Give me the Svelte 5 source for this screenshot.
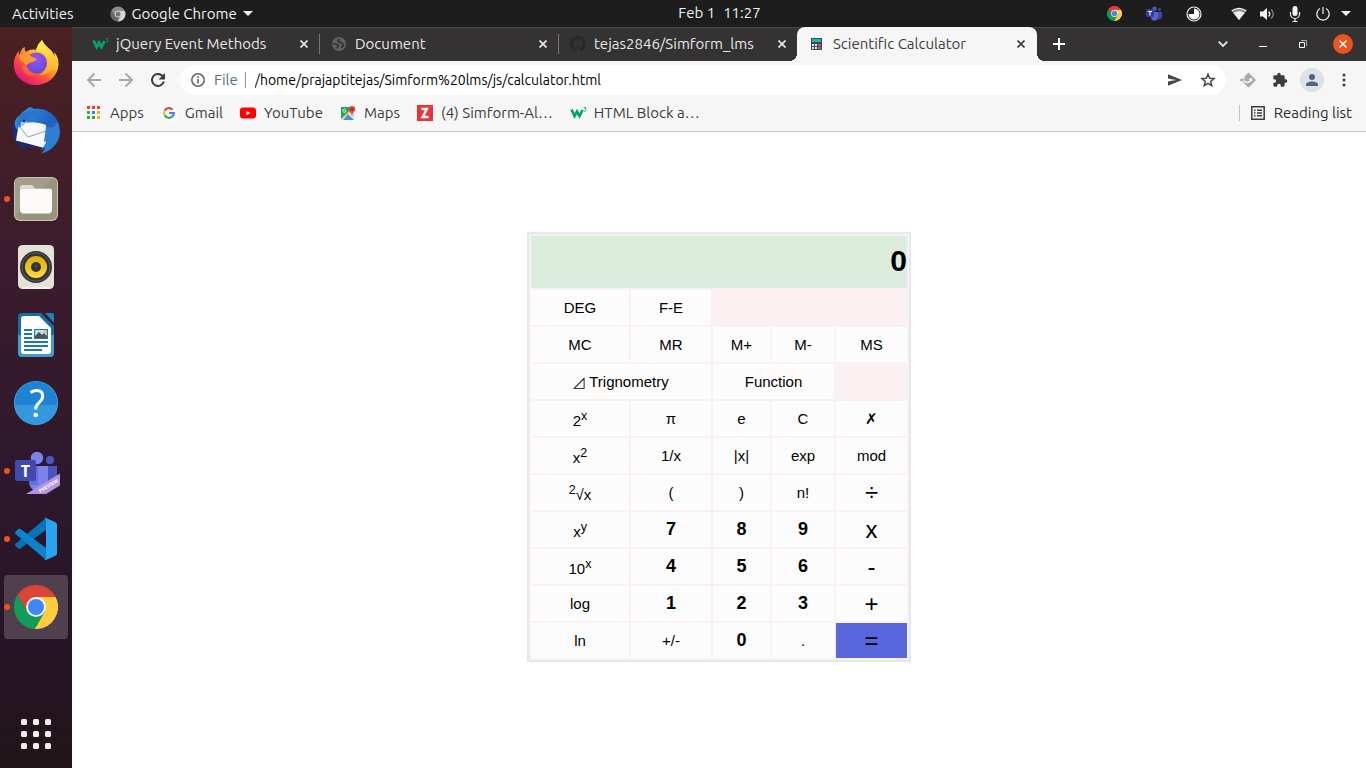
<script>
  let entry = $state('0');

  const tabs = [
    { icon: 'w3', title: 'jQuery Event Methods', active: false },
    { icon: 'globe', title: 'Document', active: false },
    { icon: 'github', title: 'tejas2846/Simform_lms', active: false },
    { icon: 'calc', title: 'Scientific Calculator', active: true },
  ];

  const bookmarks = [
    { icon: 'apps', label: 'Apps' },
    { icon: 'google', label: 'Gmail' },
    { icon: 'youtube', label: 'YouTube' },
    { icon: 'maps', label: 'Maps' },
    { icon: 'z', label: '(4) Simform-Al…' },
    { icon: 'w3', label: 'HTML Block a…' },
  ];

  const dock = [
    { icon: 'firefox', label: 'Firefox', running: false },
    { icon: 'thunderbird', label: 'Thunderbird', running: false },
    { icon: 'files', label: 'Files', running: true },
    { icon: 'rhythmbox', label: 'Rhythmbox', running: false },
    { icon: 'writer', label: 'LibreOffice Writer', running: false },
    { icon: 'help', label: 'Help', running: false },
    { icon: 'teams', label: 'Microsoft Teams', running: true },
    { icon: 'vscode', label: 'Visual Studio Code', running: true },
    { icon: 'chrome', label: 'Google Chrome', running: true, focused: true },
  ];

  const keys = [
    { t: 'DEG' }, { t: 'F-E' }, { blank: 'three' },
    { t: 'MC' }, { t: 'MR' }, { t: 'M+' }, { t: 'M-' }, { t: 'MS' },
    { t: '◿ Trignometry', wide: true }, { t: 'Function', wide: true }, { blank: 'one' },
    { t: '2', sup: 'x' }, { t: 'π' }, { t: 'e' }, { t: 'C' }, { t: '✗' },
    { t: 'x', sup: '2' }, { t: '1/x' }, { t: '|x|' }, { t: 'exp' }, { t: 'mod' },
    { pre: '2', t: '√x' }, { t: '(' }, { t: ')' }, { t: 'n!' }, { t: '÷', kind: 'op' },
    { t: 'x', sup: 'y' }, { t: '7', kind: 'num' }, { t: '8', kind: 'num' }, { t: '9', kind: 'num' }, { t: 'x', kind: 'op' },
    { t: '10', sup: 'x' }, { t: '4', kind: 'num' }, { t: '5', kind: 'num' }, { t: '6', kind: 'num' }, { t: '-', kind: 'op' },
    { t: 'log' }, { t: '1', kind: 'num' }, { t: '2', kind: 'num' }, { t: '3', kind: 'num' }, { t: '+', kind: 'op' },
    { t: 'ln' }, { t: '+/-' }, { t: '0', kind: 'num' }, { t: '.' }, { t: '=', kind: 'op equals' },
  ];

  function press(key) {
    if (key.kind === 'num') entry = entry === '0' ? key.t : entry + key.t;
    else if (key.t === 'C') entry = '0';
    else if (key.t === '✗') entry = entry.length > 1 ? entry.slice(0, -1) : '0';
    else if (key.t === '.' && !entry.includes('.')) entry += '.';
  }
</script>

{#snippet chromeLogo(size)}
  <svg width={size} height={size} viewBox="0 0 44 44" aria-hidden="true">
    <path fill="#db4437" d="M3.54 10.03A22 22 0 0 1 41.6 12H22l-8.66 15z" />
    <path fill="#0f9d58" d="M3.54 10.03 13.34 27h17.32l-9.8 16.97A22 22 0 0 1 3.54 10.03z" />
    <path fill="#ffcd40" d="M41.6 12a22 22 0 0 1-20.74 31.97L30.66 27 22 12z" />
    <circle cx="22" cy="22" r="10" fill="#f1f1f1" />
    <circle cx="22" cy="22" r="8" fill="#4285f4" />
  </svg>
{/snippet}

{#snippet smallIcon(name)}
  {#if name === 'w3'}
    <svg width="18" height="16" viewBox="0 0 18 16" aria-hidden="true">
      <path d="M1.500 4.500 4.500 11 7 6.500 9.500 11 12.500 5" fill="none" stroke="#04a56b" stroke-width="2.700" />
      <path d="M13.800 2.500h2.200l-1.200 1.500c1.700.2 1.500 2.300-.2 2.300-.5 0-.9-.2-1.100-.6" fill="none" stroke="#04a56b" stroke-width=".8" />
    </svg>
  {:else if name === 'globe'}
    <svg width="16" height="16" viewBox="0 0 16 16" aria-hidden="true">
      <circle cx="8" cy="8" r="7" fill="#5f6368" />
      <path d="M1.800 7.500 5 8c1.500.2 2.300.8 2.200 2-.1.900-1 1-1.200 2.500M8.500 3.300C7 3.500 6.500 4.500 7 5.300c.8 1 2.300.5 3.200 1.200.9.8 1 1.800 2.300 2-.3 1.500-1.300 2.500-2.500 3" fill="none" stroke="#343233" stroke-width="1.700" />
    </svg>
  {:else if name === 'github'}
    <svg width="16" height="16" viewBox="0 0 16 16" aria-hidden="true">
      <path fill="#24292e" d="M8 0C3.580 0 0 3.580 0 8c0 3.540 2.290 6.530 5.470 7.590.4.070.55-.17.55-.38 0-.19-.01-.82-.01-1.490-2.010.37-2.530-.49-2.690-.94-.09-.23-.48-.94-.82-1.130-.28-.15-.68-.52-.01-.53.63-.01 1.080.58 1.230.82.72 1.210 1.870.87 2.330.66.07-.52.28-.87.51-1.070-1.780-.2-3.640-.89-3.640-3.950 0-.87.31-1.590.82-2.150-.08-.2-.36-1.020.08-2.120 0 0 .67-.21 2.200.82.64-.18 1.320-.27 2-.27s1.360.09 2 .27c1.530-1.040 2.200-.82 2.200-.82.44 1.100.16 1.920.08 2.120.51.56.82 1.270.82 2.150 0 3.070-1.870 3.750-3.650 3.950.29.25.54.73.54 1.480 0 1.070-.01 1.930-.01 2.200 0 .21.15.46.55.38A8 8 0 0 0 16 8c0-4.420-3.580-8-8-8z" />
    </svg>
  {:else if name === 'calc'}
    <svg width="16" height="16" viewBox="0 0 16 16" aria-hidden="true">
      <path fill="#fff" d="M1 1h13v14H1z" />
      <path fill="#34495e" d="M2 2h11v12H2z" />
      <path fill="#1abc9c" d="M3 3h9v3H3z" />
      <path fill="#dfe6ec" d="M3 8h2v2H3zm3 0h2v2H6zm-3 3h2v2H3zm3 0h2v2H6z" />
      <path fill="#e74c3c" d="M9 8h3v2H9zm0 3h3v2H9z" />
    </svg>
  {:else if name === 'apps'}
    <svg width="14" height="14" viewBox="0 0 14 14" aria-hidden="true">
      <path fill="#f43b30" d="M0 0h3v3H0zm5 0h3v3H5zm5 0h3v3h-3z" />
      <path fill="#34a853" d="M0 5h3v3H0zm0 5h3v3H0zm5 0h3v3H5z" />
      <path fill="#2684fc" d="M5 5h3v3H5z" />
      <path fill="#fbb003" d="M10 5h3v3h-3zm0 5h3v3h-3z" />
    </svg>
  {:else if name === 'google'}
    <svg width="16" height="16" viewBox="0 0 16 16" aria-hidden="true">
      <circle cx="8" cy="8" r="8" fill="#fff" />
      <g fill="none" stroke-width="2.200">
        <path stroke="#ea4335" d="M3.700 5.700A4.800 4.800 0 0 1 11.500 4.700" />
        <path stroke="#fbbc05" d="M3.700 5.700a4.800 4.800 0 0 0 0 4.600" />
        <path stroke="#34a853" d="M3.700 10.300a4.800 4.800 0 0 0 7.400 1.400" />
        <path stroke="#4285f4" d="M8 8h4.800a4.800 4.800 0 0 1-1.700 3.700" />
      </g>
    </svg>
  {:else if name === 'youtube'}
    <svg width="16" height="16" viewBox="0 0 16 16" aria-hidden="true">
      <rect x="0" y="2.500" width="16" height="11" rx="3" fill="#f00" />
      <path fill="#fff" d="M6.400 5.700v4.600l4-2.300z" />
    </svg>
  {:else if name === 'maps'}
    <svg width="16" height="16" viewBox="0 0 16 16" aria-hidden="true">
      <path fill="#1fa463" d="M1 2h9v5L1 15z" />
      <path fill="#f5f5f5" d="m1 14 9-8 1.500 2L4 15H2z" />
      <path fill="#4a89f3" d="m8 9 6 6H3z" />
      <path fill="#d5d5d5" d="m11 7 3 2v5L9.500 9z" />
      <path fill="#fbc216" d="m8.500 6.500 2-1.500.5 1.500L2 14.500 1 14z" />
      <path d="M5.700 4.800A1.600 1.600 0 1 0 6 6H4.600" fill="none" stroke="#fff" stroke-width=".8" />
      <path fill="#dc4b3e" d="M12 1a3.300 3.300 0 0 0-3.300 3.300c0 2.300 2.600 3.200 3.300 6.200.7-3 3.300-3.900 3.300-6.200A3.300 3.300 0 0 0 12 1z" />
      <circle cx="12" cy="4.300" r="1.200" fill="#822f2b" />
    </svg>
  {:else if name === 'z'}
    <svg width="16" height="16" viewBox="0 0 16 16" aria-hidden="true">
      <path fill="#ea3439" d="M0 0h16v16H0z" />
      <path d="M4.500 4h5.400L5.600 12h6" fill="none" stroke="#fff" stroke-width="2.300" />
    </svg>
  {/if}
{/snippet}

{#snippet dockIcon(name)}
  {#if name === 'firefox'}
    <svg width="48" height="48" viewBox="0 0 48 48" aria-hidden="true">
      <defs>
        <linearGradient id="fx-body" x1=".85" y1=".1" x2=".2" y2=".95">
          <stop offset="0" stop-color="#fff14f" /><stop offset=".35" stop-color="#ffb52e" />
          <stop offset=".62" stop-color="#ff5a36" /><stop offset="1" stop-color="#e3107c" />
        </linearGradient>
        <linearGradient id="fx-flame" x1=".5" y1="0" x2=".6" y2="1">
          <stop offset="0" stop-color="#fff44f" /><stop offset="1" stop-color="#ffa52c" />
        </linearGradient>
        <radialGradient id="fx-core" cx=".5" cy=".3" r=".7">
          <stop offset="0" stop-color="#a04ff0" /><stop offset="1" stop-color="#5a4fd8" />
        </radialGradient>
      </defs>
      <path fill="url(#fx-body)" d="M30 1c-1 4-5 7-6 10-4-1-8 0-10 2-1-1-1.500-3-1.300-5C9 10 8 14 7.500 16c-.9-1-.8-3-.6-4C3 16 1.500 22 1.800 26.500 2.500 38 12 46 24 46c12.500 0 22.500-9.500 22.500-21.500C46.500 20 45 16 42 13c.5 2 .6 3 .3 4.500C40 10 32 8 30 1z" />
      <path fill="url(#fx-flame)" d="M30 1c-4 3.500-6 8-6 12 7-1 11 4 11.500 10 .3 6-3 11-9 13 9 .5 16-5 18-13 .4-2 0-5-2.200-6.500C40 10 33 8 30 1z" />
      <circle cx="24.500" cy="24" r="10.500" fill="url(#fx-core)" />
      <path fill="#ff9a30" d="M7 16c3-1.500 6-1.500 9-1 3 2 5 3.500 8.500 4.500 0 2-2 3-5.500 4-2 0-3 2-5 3-2-3-7-5-7-10.500z" />
      <path fill="#ff6a35" d="M14 26c2 5 6 9 12 9-8 4-16 0-16-8z" opacity=".7" />
    </svg>
  {:else if name === 'thunderbird'}
    <svg width="48" height="48" viewBox="0 0 48 48" aria-hidden="true">
      <defs>
        <linearGradient id="tb" x1="0" y1="0" x2="1" y2="1">
          <stop offset="0" stop-color="#2f9be5" /><stop offset=".55" stop-color="#1f5fc0" /><stop offset="1" stop-color="#2c78cf" />
        </linearGradient>
      </defs>
      <path fill="#1d2b78" d="M1 17C-2 30 5 40 14 43l-2-5 11 5z" />
      <path fill="url(#tb)" d="M15 2c1-2 4-2.500 7 0C37 .5 48 11 48 25c0 9-6 18-19 22l4-5-5 1 8-8-5 1 3-12-18-8-9 8C1 20 1 13 8 8c2-3 4-4 7-6z" />
      <path fill="#f7f8fa" d="M7 18c10-4 18-3 27 0v24L4 34c1-6 1-8 3-16z" />
      <path fill="#1f2a5c" d="m4 33.500 30 8V43L5 36z" />
      <path fill="none" stroke="#9aa2a8" stroke-width="1" d="m7 19 9 11 18-6" />
      <path fill="#2774cb" d="M8 8c5-5 17-6 24-1-7-1-13 1-15 6-3 1-6 2-9 8-3-5-3-9 0-13z" />
      <path fill="#8fd0ef" d="m8 21 1-6c2-1 4 0 6-1-1 3-4 4-7 7z" />
      <circle cx="12" cy="14" r="1.300" fill="#0f1d3f" />
      <path fill="#2f7fd2" d="M34 19c5 3 9 1 12-4 4 13-1 26-16 31l4-5-4 1 5-8-3 1z" />
    </svg>
  {:else if name === 'files'}
    <svg width="48" height="48" viewBox="0 0 48 48" aria-hidden="true">
      <rect x="2" y="2" width="44" height="44" rx="6" fill="#c8c3b0" />
      <rect x="3" y="3" width="42" height="42" rx="5" fill="#999480" />
      <path fill="#a39e8a" d="M3 8a5 5 0 0 1 5-5h33L3 40z" />
      <path fill="#dedacd" d="M8 12.500A2.500 2.500 0 0 1 10.500 10H20l3 3.500h14.500A2.500 2.500 0 0 1 40 16v6H8z" />
      <rect x="8" y="14" width="32" height="24" rx="3" fill="#fbfaf8" />
      <path d="M10 38.500h28" stroke="#ccc7ba" />
    </svg>
  {:else if name === 'rhythmbox'}
    <svg width="48" height="48" viewBox="0 0 48 48" aria-hidden="true">
      <defs>
        <linearGradient id="cone" x1="0" y1="0" x2="0" y2="1">
          <stop offset="0" stop-color="#dfb017" /><stop offset=".5" stop-color="#edc31c" /><stop offset="1" stop-color="#ffd94f" />
        </linearGradient>
      </defs>
      <rect x="6" y="2" width="36" height="44" rx="4.500" fill="#e6e2d7" />
      <path d="M10 45h28" stroke="#fff" />
      <circle cx="24" cy="24" r="16" fill="#333536" />
      <circle cx="24" cy="24" r="14.200" fill="none" stroke="#555b60" />
      <circle cx="24" cy="24" r="11" fill="url(#cone)" />
      <circle cx="24" cy="24" r="5" fill="#303435" />
      <circle cx="24" cy="23" r="1.500" fill="#4d5052" />
    </svg>
  {:else if name === 'writer'}
    <svg width="48" height="48" viewBox="0 0 48 48" aria-hidden="true">
      <path fill="#1171a5" d="M10 2h19l13 13v27a4 4 0 0 1-4 4H10a4 4 0 0 1-4-4V6a4 4 0 0 1 4-4z" />
      <path fill="#3d9fca" d="M6 24h36v18a4 4 0 0 1-4 4H10a4 4 0 0 1-4-4z" />
      <path fill="#1f83b7" d="M33 2h7a2 2 0 0 1 2 2v8z" />
      <path fill="#fff" d="M12 5h15l12 12v23a3 3 0 0 1-3 3H12a3 3 0 0 1-3-3V8a3 3 0 0 1 3-3z" />
      <path stroke="#2177a8" stroke-width="2" d="M12 19h8m-8 4h8m-8 4h8m-8 4h24m-24 4h24m-24 4h18" />
      <path fill="#2177a8" d="M22 18h14v10H22z" />
      <path fill="#b5dcf1" d="M23 19h12v8H23z" />
      <path fill="#54514d" d="M23 27v-2l4-4 3 3 2-2 3 3v2z" />
      <path fill="#f2c31a" d="M31 19h4v4z" />
    </svg>
  {:else if name === 'help'}
    <svg width="48" height="48" viewBox="0 0 48 48" aria-hidden="true">
      <circle cx="24" cy="24" r="22" fill="#57b1ec" />
      <circle cx="24" cy="23.700" r="21.300" fill="#1f83d5" />
      <path fill="#3498df" d="M2.700 26h42.500a21.300 21.300 0 0 1-42.500 0z" />
      <path d="M18.500 13.500c2-1.300 4-2 6-2 4 0 6.200 2.200 6.200 5.500 0 6.500-7 6.500-7 12.500v1" fill="none" stroke="#fff" stroke-width="3" />
      <circle cx="23.700" cy="36" r="2.300" fill="#fff" />
    </svg>
  {:else if name === 'teams'}
    <svg width="48" height="48" viewBox="0 0 48 48" aria-hidden="true">
      <circle cx="38" cy="13" r="4.200" fill="#4a55bd" />
      <circle cx="25" cy="11" r="6.200" fill="#7b83eb" />
      <path fill="#4b53bc" d="M34 19h11v13c0 5-4 8-10 8z" />
      <path fill="#7b83eb" d="M18 19h18v15c0 7-5 10-10 10-6 0-9-5-9-9z" />
      <path fill="#5059c9" d="M17 19h9v19h-9z" opacity=".5" />
      <rect x="3" y="13" width="21" height="21" rx="1.800" fill="#4149ad" />
      <text x="13.500" y="29.500" class="teams-t">T</text>
      <path fill="#b394e4" d="M48 26.500v12L34 47H14z" />
      <text class="preview" transform="translate(28 46) rotate(-31)">PREVIEW</text>
    </svg>
  {:else if name === 'vscode'}
    <svg width="48" height="48" viewBox="0 0 48 48" aria-hidden="true">
      <path fill="#0a71b5" d="M34 3v12L8.500 33.500a1.500 1.500 0 0 1-2 0L3.500 31a1.500 1.500 0 0 1 0-2.200z" />
      <path fill="#0d83cc" d="M34 45V33L8.500 14a1.500 1.500 0 0 0-2 0l-3 2.700a1.500 1.500 0 0 0 0 2.200z" />
      <path fill="#29a3ef" d="m34 3 9.500 4.200A2.500 2.500 0 0 1 45 9.500v29a2.500 2.500 0 0 1-1.500 2.300L34 45c-1 .4-2 0-2.500-.5 1 .6 2.500 0 2.500-1.500V5c0-1.500-1.500-2-2.500-1.500.5-.6 1.500-.9 2.500-.5z" />
    </svg>
  {:else}
    {@render chromeLogo(44)}
  {/if}
{/snippet}

<div class="desktop">
  <header class="topbar">
    <div class="top-left">
      <button class="activities">Activities</button>
      <button class="app-menu">
        <svg width="16" height="16" viewBox="0 0 16 16" aria-hidden="true">
          <circle cx="8" cy="8" r="7.500" fill="#8b8b8b" />
          <path fill="#d6d6d6" d="M14.800 5A7.500 7.500 0 0 1 8 15.500L11 9.500 8 5z" />
          <path fill="#666" d="m1.500 4.500 3.700 5.300L8 11l-.5 4.500A7.500 7.500 0 0 1 1.500 4.500z" />
          <circle cx="8" cy="8" r="3.300" fill="#ddd" />
          <circle cx="8" cy="8" r="2.500" fill="#777" />
        </svg>
        Google Chrome
        <svg width="10" height="6" viewBox="0 0 10 6" aria-hidden="true"><path fill="#f2f2f2" d="M0 0h10L5 5z" /></svg>
      </button>
    </div>
    <button class="clock"><span>Feb 1</span><span>11:27</span></button>
    <div class="tray">
      {@render chromeLogo(15)}
      <svg class="tray-teams" width="16" height="16" viewBox="0 0 16 16" aria-hidden="true">
        <circle cx="8.500" cy="2.800" r="2.200" fill="#5059c9" /><circle cx="13.500" cy="3.500" r="1.500" fill="#3c45ad" />
        <path fill="#3c45ad" d="M10 6h6v4c0 3-3 4-5 3z" /><path fill="#5a63d0" d="M5 6h7v5c0 5-7 5-7 0z" />
        <rect y="3" width="8" height="8" rx="1" fill="#333c9f" /><path d="M2 5.500h4M4 5.500V9.500" stroke="#fff" fill="none" />
      </svg>
      <svg class="tray-timer" width="16" height="16" viewBox="0 0 16 16" aria-hidden="true">
        <circle cx="8" cy="8" r="7" fill="none" stroke="#f2f2f2" stroke-width="1.200" />
        <path fill="#fff" d="M8 2.500A5.500 5.500 0 1 1 2.500 8H8z" />
      </svg>
      <svg class="tray-wifi" width="16" height="16" viewBox="0 0 16 16" aria-hidden="true">
        <path fill="#8d8d8d" d="M.5 5C5 1.500 11 1.500 15.500 5L8 14z" /><path fill="#f2f2f2" d="M2.500 7C6 4.700 10 4.700 13.500 7L8 14z" /><path d="M.7 4.800c4.500-3 10-3 14.600 0" fill="none" stroke="#f2f2f2" stroke-width="1.300" />
      </svg>
      <svg width="16" height="16" viewBox="0 0 16 16" aria-hidden="true">
        <path fill="#f2f2f2" d="M1 5.500h3L8 2v12l-4-3.500H1z" /><path d="M9.700 5.500c1.300 1.500 1.300 3.500 0 5" fill="none" stroke="#f2f2f2" stroke-width="1.300" /><path d="M12 3.500c3 2.500 3 6.500 0 9" fill="none" stroke="#8c8c8c" stroke-width="1.200" />
      </svg>
      <svg width="16" height="16" viewBox="0 0 16 16" aria-hidden="true">
        <rect x="5.500" y="0" width="5" height="10" rx="2.500" fill="#f2f2f2" /><path d="M3.500 6v2a4.500 4.500 0 0 0 9 0V6M8 12.500V15M5.500 15.500h5" fill="none" stroke="#f2f2f2" stroke-width="1.200" />
      </svg>
      <svg width="16" height="16" viewBox="0 0 16 16" aria-hidden="true">
        <path d="M5 2.500a6.200 6.200 0 1 0 6 0M8 1v7" fill="none" stroke="#f2f2f2" stroke-width="1.200" />
      </svg>
      <svg width="10" height="6" viewBox="0 0 10 6" aria-hidden="true"><path fill="#f2f2f2" d="M0 0h10L5 5z" /></svg>
    </div>
  </header>

  <div class="workspace">
    <nav class="dock" aria-label="Dock">
      {#each dock as app}
        <button class="dock-item" class:running={app.running} class:focused={app.focused} aria-label={app.label}>
          {@render dockIcon(app.icon)}
        </button>
      {/each}
      <button class="dock-item show-apps" aria-label="Show Applications">
        <svg width="30" height="30" viewBox="0 0 30 30" aria-hidden="true">
          {#each [0, 12, 24] as y}
            {#each [0, 12, 24] as x}
              <rect {x} {y} width="6" height="6" rx="1.500" fill="#f1eeed" />
            {/each}
          {/each}
        </svg>
      </button>
    </nav>

    <div class="browser">
      <div class="tabstrip">
        {#each tabs as tab}
          <div class="tab" class:active={tab.active}>
            <span class="favicon">{@render smallIcon(tab.icon)}</span>
            <span class="tab-title">{tab.title}</span>
            <button class="tab-close" aria-label="Close tab">
              <svg width="8" height="8" viewBox="0 0 8 8" aria-hidden="true"><path d="m.5.500 7 7m0-7-7 7" stroke="currentColor" stroke-width="1.700" /></svg>
            </button>
          </div>
        {/each}
        <button class="new-tab" aria-label="New tab">
          <svg width="12" height="12" viewBox="0 0 12 12" aria-hidden="true"><path d="M6 0v12M0 6h12" stroke="#fff" stroke-width="2" /></svg>
        </button>
        <div class="window-controls">
          <button aria-label="Search tabs"><svg width="10" height="6" viewBox="0 0 10 6" aria-hidden="true"><path d="m.7.700 4.300 4.300L9.300.700" fill="none" stroke="#e6e6e6" stroke-width="1.800" /></svg></button>
          <button aria-label="Minimize"><svg width="8" height="8" viewBox="0 0 8 8" aria-hidden="true"><path d="M0 6.500h8" stroke="#fff" /></svg></button>
          <button aria-label="Restore"><svg width="8" height="8" viewBox="0 0 8 8" aria-hidden="true"><path d="M.5 2.500h5v5h-5z" fill="none" stroke="#fff" /><path d="M2 .500h5.500V6" fill="none" stroke="#aaa" /></svg></button>
          <button class="close" aria-label="Close"><svg width="8" height="8" viewBox="0 0 8 8" aria-hidden="true"><path d="m.5.500 7 7m0-7-7 7" stroke="#fff" stroke-width="1.500" /></svg></button>
        </div>
      </div>

      <div class="toolbar">
        <button class="tool" aria-label="Back"><svg width="16" height="16" viewBox="0 0 16 16" aria-hidden="true"><path d="M15 8H2m6.500-6.500L2 8l6.500 6.500" fill="none" stroke="#a6a6a6" stroke-width="1.800" /></svg></button>
        <button class="tool" aria-label="Forward"><svg width="16" height="16" viewBox="0 0 16 16" aria-hidden="true"><path d="M1 8h13M7.500 1.500 14 8l-6.500 6.500" fill="none" stroke="#a6a6a6" stroke-width="1.800" /></svg></button>
        <button class="tool" aria-label="Reload"><svg width="16" height="16" viewBox="0 0 16 16" aria-hidden="true"><path d="M13.800 9.500A6 6 0 1 1 12.300 3.800L14 5.500" fill="none" stroke="#3b3b3b" stroke-width="2" /><path fill="#3b3b3b" d="M15 1v6.500H8.500z" /></svg></button>
        <div class="omnibox">
          <svg width="14" height="14" viewBox="0 0 14 14" aria-hidden="true"><circle cx="7" cy="7" r="6.200" fill="none" stroke="#5f6368" stroke-width="1.500" /><path d="M7 6v4.500M7 3.300V5" stroke="#5f6368" stroke-width="1.600" /></svg>
          <label class="scheme" for="address">File</label>
          <input id="address" type="text" value="/home/prajaptitejas/Simform%20lms/js/calculator.html" spellcheck="false" />
          <button class="tool" aria-label="Share"><svg width="16" height="16" viewBox="0 0 16 16" aria-hidden="true"><path fill="#474747" d="M1 2.200 15 8 1 13.800V9.500L9 8 1 6.500z" /></svg></button>
          <button class="tool" aria-label="Bookmark this page"><svg width="16" height="16" viewBox="0 0 16 16" aria-hidden="true"><path d="m8 2.200 1.700 4 4.300.4-3.300 2.800 1 4.200L8 11.400l-3.700 2.200 1-4.200L2 6.600l4.300-.4z" fill="none" stroke="#474747" stroke-width="1.500" /></svg></button>
        </div>
        <button class="tool" aria-label="Extension"><svg width="16" height="16" viewBox="0 0 16 16" aria-hidden="true"><path fill="#a8a8a8" d="m8.500.5 7.500 7.500-7.500 7.500L3 10l2-2-2-2z" /><path d="M4 8.500c1.200 2.500 4.500 2.800 6.500 0" fill="none" stroke="#f6f6f6" stroke-width="1.700" /><path fill="#f6f6f6" d="m8.500 7 3.800-1.300L12 10z" /><path fill="#f6f6f6" d="M2.500 5.500h3v4h-3z" /><circle cx="1.700" cy="8" r="1.500" fill="#a8a8a8" /><circle cx="4.700" cy="7.500" r="1.200" fill="#a8a8a8" /></svg></button>
        <button class="tool" aria-label="Extensions"><svg width="16" height="16" viewBox="0 0 24 24" aria-hidden="true"><path fill="#3c3c3c" d="M20.500 11H19V7a2 2 0 0 0-2-2h-4V3.500a2.500 2.500 0 0 0-5 0V5H4a2 2 0 0 0-2 2v3.800h1.500a2.700 2.700 0 0 1 0 5.400H2V20a2 2 0 0 0 2 2h3.800v-1.500a2.700 2.700 0 0 1 5.400 0V22H17a2 2 0 0 0 2-2v-4h1.500a2.500 2.500 0 0 0 0-5z" /></svg></button>
        <button class="tool avatar" aria-label="Profile"><svg width="14" height="14" viewBox="0 0 14 14" aria-hidden="true"><circle cx="7" cy="4" r="3" fill="#55617a" /><path fill="#55617a" d="M1 13v-1.500C1 9.300 5 8.500 7 8.500s6 .8 6 3V13z" /></svg></button>
        <button class="tool" aria-label="Menu"><svg width="4" height="14" viewBox="0 0 4 14" aria-hidden="true"><g fill="#3c3c3c"><circle cx="2" cy="2" r="1.500" /><circle cx="2" cy="7" r="1.500" /><circle cx="2" cy="12" r="1.500" /></g></svg></button>
      </div>

      <div class="bookmarks">
        {#each bookmarks as mark}
          <a class="bookmark" href="#{mark.icon}">
            <span class="favicon">{@render smallIcon(mark.icon)}</span>{mark.label}
          </a>
        {/each}
        <button class="reading">
          <svg width="14" height="14" viewBox="0 0 14 14" aria-hidden="true"><path d="M.8.800h12.400v12.400H.8z" fill="none" stroke="#3c3c3c" stroke-width="1.500" /><path d="M3 4.200h1.500M3 7h1.500M3 9.800h1.500M6 4.200h5M6 7h5M6 9.800h5" stroke="#3c3c3c" stroke-width="1.400" /></svg>
          Reading list
        </button>
      </div>

      <main class="page">
        <form class="calculator" onsubmit={(e) => e.preventDefault()}>
          <input class="display" type="text" aria-label="Result" readonly value={entry} />
          {#each keys as key}
            {#if key.blank}
              <span class="blank {key.blank}"></span>
            {:else}
              <button type="button" class="key {key.kind ?? ''}" class:wide={key.wide} onclick={() => press(key)}>{#if key.pre}<sup>{key.pre}</sup>{/if}{key.t}{#if key.sup}<sup>{key.sup}</sup>{/if}</button>
            {/if}
          {/each}
        </form>
      </main>
    </div>
  </div>
</div>

<style>
  :global(body) { margin: 0; }

  .desktop {
    min-height: 100vh;
    display: flex;
    flex-direction: column;
    font: 15px/20px Ubuntu, "Noto Sans", sans-serif;
    color: #3c3c3c;
  }
  .desktop * { box-sizing: border-box; }
  button, input {
    margin: 0;
    padding: 0;
    border: 0;
    background: none;
    font: inherit;
    color: inherit;
  }
  button { cursor: pointer; }
  svg { display: block; flex: none; }

  .topbar {
    display: grid;
    grid-template-columns: 1fr auto 1fr;
    align-items: center;
    height: 27px;
    padding: 0 15px 0 12px;
    background: #1d1d1d;
    color: #f2f2f2;
  }
  .top-left, .app-menu, .tray { display: flex; align-items: center; }
  .top-left { gap: 36px; }
  .app-menu { gap: 6px; }
  .clock { display: flex; gap: 8px; margin-left: 76px; line-height: 18px; padding-bottom: 2px; }
  .tray { justify-content: flex-end; gap: 12px; }
  .tray svg:last-child { margin-left: -2px; }
  .tray-teams { margin-left: 12px; }
  .tray-timer { margin: 0 17px 0 12px; }

  .workspace { flex: 1; display: flex; }

  .dock {
    width: 72px;
    flex: none;
    display: flex;
    flex-direction: column;
    gap: 4px;
    padding: 4px 4px 2px;
    background: linear-gradient(#4b2121, #3d1c2c 28%, #2f182c 58%, #281428 78%, #211519);
  }
  .dock-item {
    position: relative;
    display: grid;
    place-items: center;
    height: 64px;
    border-radius: 4px;
  }
  .running::before {
    content: "";
    position: absolute;
    left: 0;
    top: 29px;
    width: 6px;
    height: 6px;
    border-radius: 50%;
    background: #e95420;
  }
  .focused { background: #50404e; }
  .show-apps { margin-top: auto; }
  .teams-t { font: bold 16px "Open Sans", sans-serif; fill: #fff; text-anchor: middle; }
  .preview { font: bold 5px "Open Sans", sans-serif; fill: #fff; }

  .browser { flex: 1; min-width: 0; display: flex; flex-direction: column; background: #fff; }

  .tabstrip {
    display: flex;
    height: 34px;
    padding-left: 8px;
    background: #343233;
    box-shadow: inset 0 1px #484647;
    color: #e8e8e8;
  }
  .tab {
    position: relative;
    flex: 0 1 239px;
    min-width: 0;
    display: flex;
    align-items: center;
    gap: 8px;
    padding: 0 9px 0 12px;
  }
  .tab:nth-child(-n + 2)::after {
    content: "";
    position: absolute;
    right: -1px;
    top: 7px;
    width: 1px;
    height: 20px;
    background: #777576;
  }
  .tab.active {
    flex-basis: 240px;
    padding-right: 10px;
    border-radius: 8px 8px 0 0;
    background: #f6f6f6;
    color: #3c3c3c;
  }
  .tab.active::before, .tab.active::after {
    content: "";
    position: absolute;
    bottom: 0;
    width: 8px;
    height: 8px;
  }
  .tab.active::before { left: -8px; background: radial-gradient(circle at 0 0, transparent 8px, #f6f6f6 8px); }
  .tab.active::after { right: -8px; background: radial-gradient(circle at 100% 0, transparent 8px, #f6f6f6 8px); }
  .favicon { display: grid; place-items: center; width: 16px; height: 16px; flex: none; }
  .tab-title { flex: 1; overflow: hidden; white-space: nowrap; }
  .tab-close { display: grid; place-items: center; width: 12px; height: 16px; }
  .new-tab { width: 44px; display: grid; place-items: center; }
  .window-controls { display: flex; align-items: center; gap: 20px; margin-left: auto; padding-right: 13px; }
  .window-controls button { display: grid; place-items: center; width: 20px; height: 20px; }
  .window-controls .close { border-radius: 50%; background: #e95420; }

  .toolbar { display: flex; align-items: center; gap: 8px; padding: 4px 10px 3px; background: #f6f6f6; }
  .tool { flex: none; display: grid; place-items: center; width: 24px; height: 24px; }
  .avatar { border-radius: 50%; background: #dee1e6; }
  .omnibox {
    flex: 1;
    display: flex;
    align-items: center;
    gap: 9px;
    height: 30px;
    margin: 0 2px;
    padding: 0 6px 0 11px;
    border-radius: 15px;
    background: #fff;
  }
  .scheme { padding-right: 7px; border-right: 1px solid #8d8f92; line-height: 16px; color: #5f6b85; }
  .omnibox input { flex: 1; min-width: 0; outline: 0; font-size: 14px; color: #000; }

  .bookmarks { display: flex; align-items: center; gap: 17px; height: 34px; padding: 0 14px 4px; border-bottom: 1px solid #c4c4c4; background: #f6f6f6; }
  .bookmark { display: flex; align-items: center; gap: 8px; color: inherit; text-decoration: none; white-space: nowrap; }
  .reading { display: flex; align-items: center; gap: 9px; margin-left: auto; padding-left: 11px; border-left: 1px solid #c2c2c2; line-height: 16px; white-space: nowrap; color: #2c2c2c; }

  .page { flex: 1; padding: 100px 16px; }
  .calculator {
    display: grid;
    grid-template-columns: minmax(0, 98fr) minmax(0, 80fr) minmax(0, 57fr) minmax(0, 62fr) minmax(0, 71fr);
    grid-template-rows: 52px;
    grid-auto-rows: 35px;
    gap: 2px;
    max-width: 384px;
    margin: 0 auto;
    padding: 2px;
    border: 2px solid #e6e6ed;
    background: #fbf0f2;
    font: 15px/17px "Liberation Sans", Arial, sans-serif;
    color: #000;
  }
  .display {
    grid-column: 1 / -1;
    min-width: 0;
    width: 100%;
    padding-bottom: 2px;
    border-bottom: 1px solid #e2e4ee;
    background: #dbeddd;
    font-size: 30px;
    font-weight: bold;
    text-align: right;
  }
  .key { background: #fcfcfc; white-space: nowrap; }
  .wide { grid-column: span 2; }
  .three { grid-column: span 3; }
  .num { font-size: 18px; font-weight: bold; }
  .op { font-size: 24px; }
  .equals { background: #5867dc; }
</style>
